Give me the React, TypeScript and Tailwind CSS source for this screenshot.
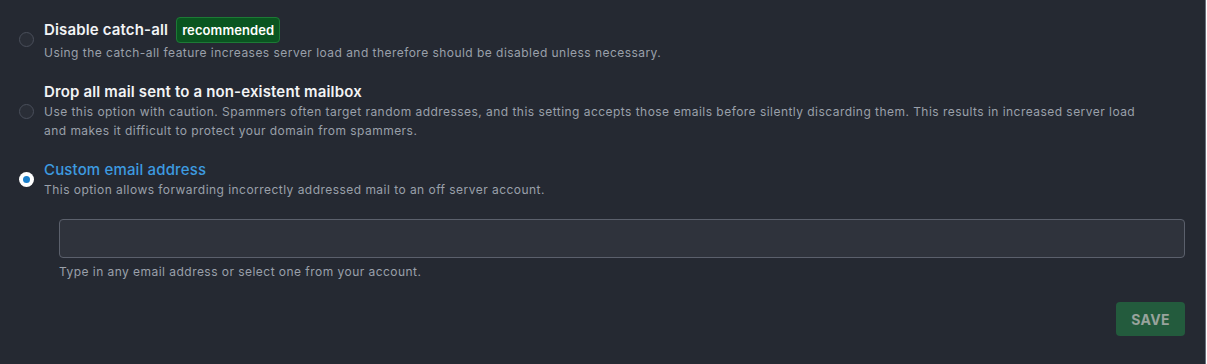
const font = { fontFamily: "Inter, 'Noto Sans', sans-serif" };

function Radio({ checked }: { checked?: boolean }) {
  if (checked) {
    return (
      <span className="flex h-[15px] w-[15px] shrink-0 items-center justify-center rounded-full bg-white">
        <span className="h-[7px] w-[7px] rounded-full bg-[#1a7fcb]" />
      </span>
    );
  }
  return <span className="h-[15px] w-[15px] shrink-0 rounded-full border border-[#4a4f5b] bg-[#2a2e37]" />;
}

function Option({
  title,
  desc,
  checked,
  badge,
}: {
  title: string;
  desc: string;
  checked?: boolean;
  badge?: string;
}) {
  return (
    <div className="flex items-center gap-[10px]">
      <Radio checked={checked} />
      <div>
        <div className="flex items-center gap-[8px]">
          <span
            className={`text-[15px] leading-[20px] tracking-[0.15px] ${checked ? "font-medium text-[#3d9be0]" : "font-semibold text-[#f2f3f5]"}`}
          >
            {title}
          </span>
          {badge && (
            <span className="rounded-[4px] border border-[#1d7a36] bg-[#0a5520] px-[5px] text-[13px] font-semibold leading-[24px] tracking-[0.1px] text-white">
              {badge}
            </span>
          )}
        </div>
        <p className="text-[12px] leading-[19px] tracking-[0.46px] text-[#9aa0aa]">{desc}</p>
      </div>
    </div>
  );
}

export default function App() {
  return (
    <div className="h-[364px] w-[1206px] border-r border-[#6b707c] bg-[#252932]" style={font}>
      <div className="flex flex-col gap-[20px] pl-[19px] pr-[50px] pt-[17px]">
        <Option
          title="Disable catch-all"
          badge="recommended"
          desc="Using the catch-all feature increases server load and therefore should be disabled unless necessary."
        />
        <Option
          title="Drop all mail sent to a non-existent mailbox"
          desc="Use this option with caution. Spammers often target random addresses, and this setting accepts those emails before silently discarding them. This results in increased server load and makes it difficult to protect your domain from spammers."
        />
        <Option
          checked
          title="Custom email address"
          desc="This option allows forwarding incorrectly addressed mail to an off server account."
        />
      </div>

      <div className="mt-[20px] pl-[59px] pr-[20px]">
        <input
          type="text"
          className="block h-[39px] w-full rounded-[4px] border border-[#5b606c] bg-[#2f333c] px-3 text-sm text-white outline-none"
        />
        <p className="mt-[4px] text-[12px] leading-[19px] tracking-[0.46px] text-[#9aa0aa]">
          Type in any email address or select one from your account.
        </p>
        <div className="mt-[21px] flex justify-end">
          <button className="h-[34px] w-[69px] rounded-[4px] bg-[#235b3d] text-[14px] font-bold tracking-[0.3px] text-[#98a39c]">
            SAVE
          </button>
        </div>
      </div>
    </div>
  );
}
